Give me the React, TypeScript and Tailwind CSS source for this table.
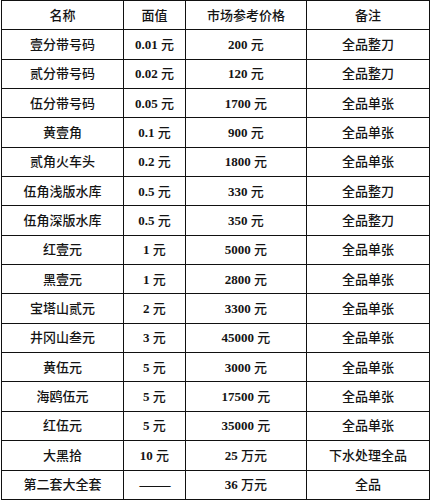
import React from "react";

const rows: [string, string, string, string, string, string][] = [
  ["壹分带号码", "0.01", "元", "200", "元", "全品整刀"],
  ["贰分带号码", "0.02", "元", "120", "元", "全品整刀"],
  ["伍分带号码", "0.05", "元", "1700", "元", "全品单张"],
  ["黄壹角", "0.1", "元", "900", "元", "全品单张"],
  ["贰角火车头", "0.2", "元", "1800", "元", "全品单张"],
  ["伍角浅版水库", "0.5", "元", "330", "元", "全品整刀"],
  ["伍角深版水库", "0.5", "元", "350", "元", "全品整刀"],
  ["红壹元", "1", "元", "5000", "元", "全品单张"],
  ["黑壹元", "1", "元", "2800", "元", "全品单张"],
  ["宝塔山贰元", "2", "元", "3300", "元", "全品单张"],
  ["井冈山叁元", "3", "元", "45000", "元", "全品单张"],
  ["黄伍元", "5", "元", "3000", "元", "全品单张"],
  ["海鸥伍元", "5", "元", "17500", "元", "全品单张"],
  ["红伍元", "5", "元", "35000", "元", "全品单张"],
  ["大黑拾", "10", "元", "25", "万元", "下水处理全品"],
  ["第二套大全套", "", "", "36", "万元", "全品"],
];

const cell =
  "flex items-center justify-center border-r border-b border-[#111] text-[13px] leading-none font-medium text-[#141414]";

function Num({ n, u }: { n: string; u: string }) {
  return (
    <span>
      <span className="font-bold" style={{ fontFamily: '"Liberation Serif", serif' }}>{n}</span>
      <span> {u}</span>
    </span>
  );
}

export default function App() {
  return (
    <div className="w-[430px] h-[500px] bg-white overflow-hidden">
      <div
        className="ml-[1px] grid grid-cols-[122px_62px_121px_123px] grid-rows-[repeat(17,29.35px)] border-l border-t border-[#111]"
        style={{ fontFamily: '"Liberation Serif", "Noto Sans CJK SC", serif' }}
      >
        <div className={cell}>名称</div>
        <div className={cell}>面值</div>
        <div className={cell}>市场参考价格</div>
        <div className={cell}>备注</div>
        {rows.map((r, i) => (
          <React.Fragment key={i}>
            <div className={cell}>{r[0]}</div>
            <div className={cell}>
              {r[1] ? <Num n={r[1]} u={r[2]} /> : <span className="tracking-[-1px] text-[16px]">——</span>}
            </div>
            <div className={cell}>
              <Num n={r[3]} u={r[4]} />
            </div>
            <div className={cell}>{r[5]}</div>
          </React.Fragment>
        ))}
      </div>
    </div>
  );
}
